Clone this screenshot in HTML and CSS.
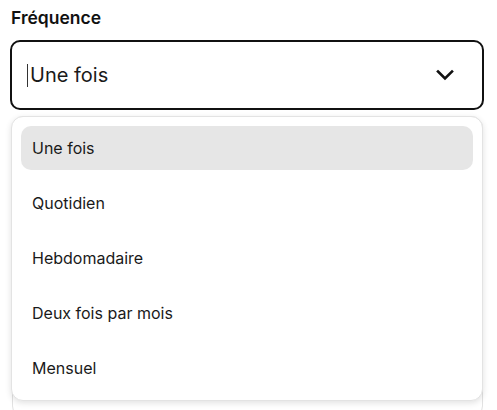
FILE: index.html
```html
<!DOCTYPE html>
<html lang="fr">
<head>
<meta charset="utf-8">
<link rel="stylesheet" href="styles.css">
</head>
<body>
<div class="field">
  <div class="label">Fréquence</div>
  <div class="select">
    <div class="control">
      <span class="caret"></span><span class="value">Une fois</span>
      <svg class="chevron" width="18" height="12" viewBox="0 0 18 12"><polyline points="2,2.5 9,9.5 16,2.5" fill="none" stroke="#111" stroke-width="2.6" stroke-linecap="square" stroke-linejoin="miter"/></svg>
    </div>
    <ul class="menu">
      <li class="item active">Une fois</li>
      <li class="item">Quotidien</li>
      <li class="item">Hebdomadaire</li>
      <li class="item">Deux fois par mois</li>
      <li class="item">Mensuel</li>
    </ul>
  </div>
  <div class="behind"></div>
</div>
</body>
</html>
```
FILE: styles.css
```css
html, body {
  margin: 0;
  padding: 0;
  background: #fff;
  font-family: Inter, "Liberation Sans", sans-serif;
  color: #1a1a1a;
}
body {
  height: 410px;
  overflow: hidden;
}
.field {
  width: 474px;
  padding: 8px 0 0 10px;
}
.label {
  font-size: 17.5px;
  font-weight: 600;
  line-height: 20px;
  padding-left: 1px;
  margin-bottom: 12px;
  color: #111;
}
.select {
  position: relative;
}
.control {
  box-sizing: border-box;
  height: 70px;
  border: 2px solid #111;
  border-radius: 10px;
  display: flex;
  align-items: center;
  padding-left: 15px;
  padding-right: 28px;
}
.caret {
  width: 1px;
  height: 23px;
  background: #333;
  margin-right: 2px;
}
.value {
  font-size: 20px;
  line-height: 24px;
  flex: 1;
  color: #1a1a1a;
}
.chevron {
  display: block;
}
.menu {
  position: absolute;
  top: calc(100% + 6px);
  left: 1px;
  right: 1px;
  margin: 0;
  list-style: none;
  box-sizing: border-box;
  background: #fff;
  border: 1px solid #e3e3e3;
  border-radius: 12px;
  box-shadow: 0 2px 6px rgba(0, 0, 0, 0.12);
  padding: 9px 9px 10px;
  display: flex;
  flex-direction: column;
  gap: 11px;
  z-index: 2;
}
.item {
  height: 44px;
  display: flex;
  align-items: center;
  padding-left: 11px;
  border-radius: 10px;
  font-size: 16px;
  color: #1a1a1a;
}
.item.active {
  background: #e6e6e6;
}
.behind {
  margin: 6px 1px 0 2px;
  height: 300px;
  border: 1px solid #e2e2e2;
  border-radius: 12px;
}
```
